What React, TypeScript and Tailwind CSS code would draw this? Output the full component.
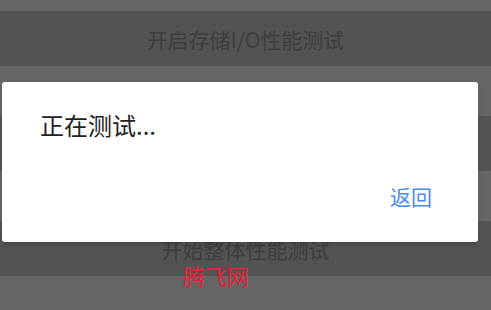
const cjk = { fontFamily: '"Noto Sans CJK SC", "Noto Sans", sans-serif' }

function Bar({ label }: { label?: string }) {
  return (
    <div className="flex h-[55px] items-center justify-center bg-[#535353] text-[21px] leading-[24px] text-[#3e3e3e]">
      {label}
    </div>
  )
}

export default function App() {
  return (
    <div className="relative h-[310px] w-[491px] overflow-hidden bg-[#656565]" style={cjk}>
      <div className="flex flex-col gap-[50px] pt-[11px]">
        <Bar label="开启存储I/O性能测试" />
        <Bar label="开始网络性能测试" />
        <Bar label="开始整体性能测试" />
      </div>

      <div className="absolute left-[183px] top-[264px] text-[22px] leading-[22px] font-normal text-[#e8203a]">
        腾飞网
      </div>

      <div className="absolute left-[2px] top-[82px] flex h-[160px] w-[476px] flex-col rounded-[3px] bg-white pt-[27px] shadow-md">
        <div className="pl-[38px] text-[24px] leading-[32px] text-[#222]">正在测试...</div>
        <div className="mt-[40px] flex justify-end pr-[46px]">
          <button className="text-[21px] leading-[30px] text-[#4a8af4]">返回</button>
        </div>
      </div>
    </div>
  )
}
